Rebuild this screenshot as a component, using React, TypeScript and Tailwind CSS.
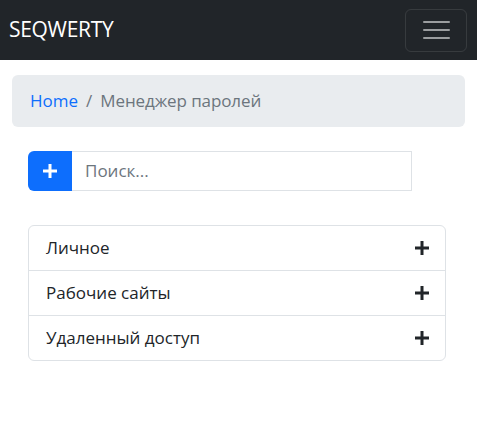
import React from 'react';

const PlusIcon = ({ className }: { className?: string }) => (
  <svg viewBox="0 0 16 16" className={className} fill="none" stroke="currentColor" strokeWidth={3}>
    <path d="M8 1v14M1 8h14" />
  </svg>
);

const groups = ['Личное', 'Рабочие сайты', 'Удаленный доступ'];

export default function App() {
  return (
    <div className="w-[477px] h-[440px] bg-white font-['Open_Sans',sans-serif]">
      {/* Navbar */}
      <nav className="h-[60px] bg-[#212529] flex items-center justify-between pl-[9px] pr-[10px]">
        <span className="text-white text-[21px] tracking-[-0.3px]">SEQWERTY</span>
        <button className="w-[62px] h-[43px] border border-white/10 rounded-md flex flex-col items-center justify-center gap-[6px]">
          <span className="block w-[27px] h-[2px] bg-white/55 rounded" />
          <span className="block w-[27px] h-[2px] bg-white/55 rounded" />
          <span className="block w-[27px] h-[2px] bg-white/55 rounded" />
        </button>
      </nav>

      <div className="px-3 pt-[15px]">
        {/* Breadcrumb */}
        <div className="h-[52px] bg-[#e9ecef] rounded-md flex items-center px-[18px] text-[17px]">
          <a className="text-[#0d6efd]">Home</a>
          <span className="text-[#6c757d] px-[8px]">/</span>
          <span className="text-[#6c757d] tracking-[-0.1px]">Менеджер паролей</span>
        </div>

        <div className="px-4">
          {/* Search */}
          <div className="mt-6 flex w-[384px] h-[40px]">
            <button className="w-[44px] bg-[#0d6efd] rounded-l-md flex items-center justify-center text-white">
              <PlusIcon className="w-[16px] h-[16px]" />
            </button>
            <div className="flex-1 border border-[#dee2e6] border-l-0 flex items-center px-[13px] text-[17px] text-[#6c757d]">
              Поиск...
            </div>
          </div>

          {/* Groups */}
          <div className="mt-[34px] w-[418px] border border-[#dee2e6] rounded-md">
            {groups.map((g, i) => (
              <div
                key={g}
                className={`flex items-center justify-between pl-[17px] pr-[15px] text-[17px] text-[#212529] ${
                  i > 0 ? 'h-[45px] border-t border-[#dee2e6]' : 'h-[44px]'
                }`}
              >
                <span>{g}</span>
                <PlusIcon className="w-[16px] h-[16px]" />
              </div>
            ))}
          </div>
        </div>
      </div>
    </div>
  );
}
